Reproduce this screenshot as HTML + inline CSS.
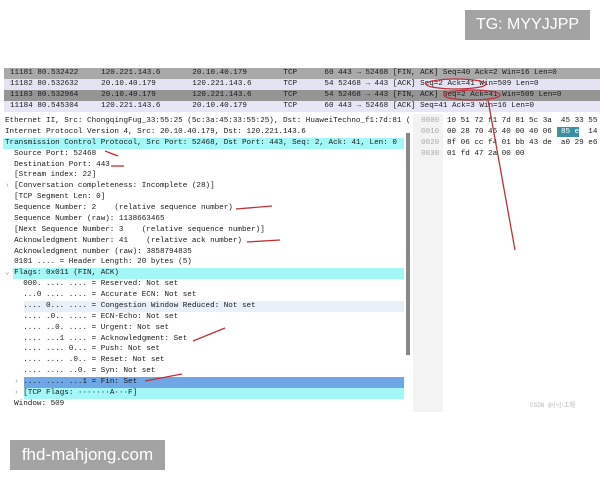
<!DOCTYPE html>
<html><head><meta charset="utf-8"><style>
body{margin:0;width:600px;height:480px;background:#fff;position:relative;overflow:hidden;font-family:"Liberation Mono",monospace;font-size:7.6px;color:#1a1a1a}
.a{position:absolute;white-space:pre;line-height:11px}
.row{position:absolute;left:4px;width:596px;height:11px}
.box{position:absolute;background:#a3a3a3;color:#fff;font-family:"Liberation Sans",sans-serif}
</style></head><body>
<div class="box" style="left:465px;top:10px;width:125px;height:30px;font-size:16px;line-height:30px;text-align:center">TG: MYYJJPP</div>
<div class="box" style="left:10px;top:440px;width:155px;height:30px;font-size:17px;line-height:30px;text-align:center">fhd-mahjong.com</div>

<div class="row" style="top:68px;background:#a9a9a9"></div>
<div class="row" style="top:79px;background:#e3e3f3"></div>
<div class="row" style="top:90px;background:#959595"></div>
<div class="row" style="top:101px;background:#e6e6f6"></div>
<div class="a" style="left:10px;top:68px">11181 80.532422     120.221.143.6       20.10.40.179        TCP      60 443 → 52468 [FIN, ACK] Seq=40 Ack=2 Win=16 Len=0</div>
<div class="a" style="left:10px;top:79px">11182 80.532632     20.10.40.179        120.221.143.6       TCP      54 52468 → 443 [ACK] Seq=2 Ack=41 Win=509 Len=0</div>
<div class="a" style="left:10px;top:90px">11183 80.532964     20.10.40.179        120.221.143.6       TCP      54 52468 → 443 [FIN, ACK] Seq=2 Ack=41 Win=509 Len=0</div>
<div class="a" style="left:10px;top:101px">11184 80.545304     120.221.143.6       20.10.40.179        TCP      60 443 → 52468 [ACK] Seq=41 Ack=3 Win=16 Len=0</div>

<div style="position:absolute;left:3px;top:138px;width:401px;height:11px;background:#a3f7f7"></div>
<div style="position:absolute;left:13px;top:268px;width:391px;height:11px;background:#a3f7f7"></div>
<div style="position:absolute;left:24px;top:301px;width:380px;height:11px;background:#e8f0fa"></div>
<div style="position:absolute;left:24px;top:377px;width:380px;height:11px;background:#6fa6e6"></div>
<div style="position:absolute;left:24px;top:388px;width:380px;height:11px;background:#a3f7f7"></div>
<div style="position:absolute;left:406px;top:133px;width:4px;height:222px;background:#888"></div>
<div style="position:absolute;left:413px;top:114px;width:30px;height:298px;background:#f3f3f3"></div>
<div style="position:absolute;left:557px;top:127px;width:22px;height:10px;background:#3a8fa0"></div>

<div class="a" style="left:5px;top:116px;line-height:10.87px">Ethernet II, Src: ChongqingFug_33:55:25 (5c:3a:45:33:55:25), Dst: HuaweiTechno_f1:7d:81 (
Internet Protocol Version 4, Src: 20.10.40.179, Dst: 120.221.143.6
Transmission Control Protocol, Src Port: 52468, Dst Port: 443, Seq: 2, Ack: 41, Len: 0
  Source Port: 52468
  Destination Port: 443
  [Stream index: 22]
<span style="color:#999">›</span> [Conversation completeness: Incomplete (28)]
  [TCP Segment Len: 0]
  Sequence Number: 2    (relative sequence number)
  Sequence Number (raw): 1138663465
  [Next Sequence Number: 3    (relative sequence number)]
  Acknowledgment Number: 41    (relative ack number)
  Acknowledgment number (raw): 3858794835
  0101 .... = Header Length: 20 bytes (5)
<span style="color:#999">⌄</span> Flags: 0x011 (FIN, ACK)
    000. .... .... = Reserved: Not set
    ...0 .... .... = Accurate ECN: Not set
    .... 0... .... = Congestion Window Reduced: Not set
    .... .0.. .... = ECN-Echo: Not set
    .... ..0. .... = Urgent: Not set
    .... ...1 .... = Acknowledgment: Set
    .... .... 0... = Push: Not set
    .... .... .0.. = Reset: Not set
    .... .... ..0. = Syn: Not set
  <span style="color:#999">›</span> .... .... ...1 = Fin: Set
  <span style="color:#999">›</span> [TCP Flags: ·······A···F]
  Window: 509</div>
<div class="a" style="left:421px;top:116px;line-height:10.87px;color:#aaa">0000
0010
0020
0030</div>
<div class="a" style="left:447px;top:116px;line-height:10.87px">10 51 72 f1 7d 81 5c 3a  45 33 55
00 28 70 46 40 00 40 06  <span style="color:#fff">85 e0</span> 14
8f 06 cc f4 01 bb 43 de  a0 29 e6
01 fd 47 2a 00 00</div>
<div class="a" style="left:530px;top:400px;font-size:6px;color:#bbb">CSDN @小小工程</div>

<svg style="position:absolute;left:0;top:0" width="600" height="480">
<g stroke="#c0303a" stroke-width="1.3" fill="none">
<ellipse cx="456" cy="84" rx="30" ry="5"/>
<ellipse cx="472" cy="95" rx="28" ry="5"/>
<line x1="488" y1="100" x2="515" y2="250"/>
<line x1="105" y1="151" x2="118" y2="156"/>
<line x1="111" y1="166" x2="124" y2="166"/>
<line x1="236" y1="209" x2="272" y2="206"/>
<line x1="247" y1="242" x2="280" y2="240"/>
<line x1="193" y1="341" x2="225" y2="328"/>
<line x1="145" y1="381" x2="182" y2="374"/>
</g></svg>
</body></html>
